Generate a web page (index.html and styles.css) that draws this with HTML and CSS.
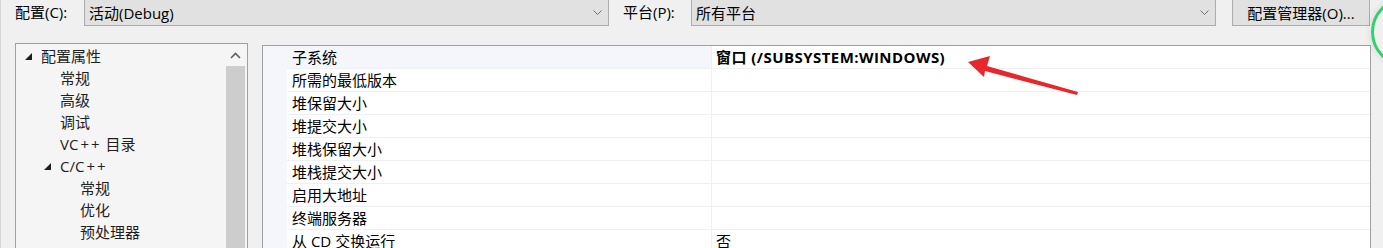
FILE: index.html
```html
<!DOCTYPE html>
<html lang="zh-CN">
  <head>
    <meta charset="UTF-8" />
    <meta name="viewport" content="width=device-width, initial-scale=1.0" />
    <title>属性页</title>
    <link rel="stylesheet" href="styles.css">
  </head>

  <body>
    <div class="toolbar">
      <label class="lbl lbl-config">配置(C):</label>
      <div class="combo">
        <span>活动(Debug)</span>
        <svg class="chev" width="9" height="6" viewBox="0 0 9 6"><polyline points="0.5,0.5 4.5,4.5 8.5,0.5" fill="none" stroke="#707070" stroke-width="1"/></svg>
      </div>
      <label class="lbl lbl-platform">平台(P):</label>
      <div class="combo">
        <span>所有平台</span>
        <svg class="chev" width="9" height="6" viewBox="0 0 9 6"><polyline points="0.5,0.5 4.5,4.5 8.5,0.5" fill="none" stroke="#707070" stroke-width="1"/></svg>
      </div>
      <button class="btn">配置管理器(O)...</button>
    </div>

    <div class="badge"></div>

    <div class="main">
      <div class="tree">
        <ul class="tree-list">
          <li class="lvl0"><span class="tri"></span>配置属性</li>
          <li class="lvl1">常规</li>
          <li class="lvl1">高级</li>
          <li class="lvl1">调试</li>
          <li class="lvl1">VC<span class="pp">++</span> 目录</li>
          <li class="lvl1 open"><span class="tri"></span>C/C<span class="pp">++</span></li>
          <li class="lvl2">常规</li>
          <li class="lvl2">优化</li>
          <li class="lvl2">预处理器</li>
        </ul>
        <div class="scrollbar">
          <div class="scroll-up">
            <svg width="11" height="7" viewBox="0 0 11 7"><polyline points="1,6 5.5,1.5 10,6" fill="none" stroke="#606060" stroke-width="1.6"/></svg>
          </div>
          <div class="thumb"></div>
        </div>
      </div>

      <div class="grid">
        <div class="gutter"></div>
        <div class="rows">
          <div class="row selected"><div class="name">子系统</div><div class="value strong">窗口 (/SUBSYSTEM:WINDOWS)</div></div>
          <div class="row"><div class="name">所需的最低版本</div><div class="value"></div></div>
          <div class="row"><div class="name">堆保留大小</div><div class="value"></div></div>
          <div class="row"><div class="name">堆提交大小</div><div class="value"></div></div>
          <div class="row"><div class="name">堆栈保留大小</div><div class="value"></div></div>
          <div class="row"><div class="name">堆栈提交大小</div><div class="value"></div></div>
          <div class="row"><div class="name">启用大地址</div><div class="value"></div></div>
          <div class="row"><div class="name">终端服务器</div><div class="value"></div></div>
          <div class="row"><div class="name">从 CD 交换运行</div><div class="value">否</div></div>
        </div>
      </div>
    </div>

    <!-- annotation arrow drawn over the screenshot -->
    <svg class="arrow" width="1383" height="248" viewBox="0 0 1383 248">
      <polygon points="967,62 989,56 986,66 1077,92 1076,95 984,71 983,77" fill="#e8262b"/>
    </svg>
  </body>
</html>
```

FILE: styles.css
```css
* {
  padding: 0;
  margin: 0;
  box-sizing: border-box;
}

html,
body {
  height: 248px;
  overflow: hidden;
}

body {
  position: relative;
  background-color: #f0f0f0;
  font-family: "Open Sans", "Noto Sans CJK SC", sans-serif;
  font-size: 15px;
  color: #000;
  border-left: 1px solid #d6d6d6;
}

.toolbar {
  display: flex;
  align-items: center;
  height: 28px;
  margin-top: -2px;
  padding-left: 14px;
}

.lbl {
  line-height: 28px;
  white-space: nowrap;
}

.lbl-config {
  width: 69px;
}

.lbl-platform {
  width: 82px;
  padding-left: 14px;
}

.combo {
  display: flex;
  align-items: center;
  justify-content: space-between;
  width: 525px;
  height: 28px;
  padding: 0 6px 0 4px;
  background-color: #e1e1e1;
  border: 1px solid #adadad;
}

.chev {
  margin-top: 2px;
}

.btn {
  width: 138px;
  height: 28px;
  margin-left: 16px;
  font-family: inherit;
  font-size: 15px;
  color: #000;
  background-color: #e1e1e1;
  border: 1px solid #adadad;
}

.badge {
  position: absolute;
  left: 1370px;
  top: -3px;
  width: 70px;
  height: 70px;
  border: 3px solid #33d16c;
  border-radius: 50%;
  box-shadow: 0 0 5px 3px rgba(0, 0, 0, 0.05);
}

.main {
  display: flex;
  align-items: flex-start;
  gap: 14px;
  padding: 17px 12px 0 14px;
}

.tree {
  display: flex;
  width: 233px;
  height: 220px;
  background-color: #f5f5f5;
  border: 1px solid #a0a0a0;
}

.tree-list {
  flex: 1;
  padding-top: 1px;
  list-style: none;
  color: #1e1e1e;
}

.tree-list li {
  height: 22px;
  line-height: 22px;
  white-space: nowrap;
}

.pp {
  letter-spacing: 2px;
  padding-left: 2px;
}

.lvl0 {
  padding-left: 9px;
}

.lvl1 {
  padding-left: 44px;
}

.lvl1.open {
  padding-left: 28px;
}

.lvl2 {
  padding-left: 64px;
}

.tri {
  display: inline-block;
  vertical-align: middle;
  width: 0;
  height: 0;
  margin: -3px 9px 0 0;
  border-left: 7px solid transparent;
  border-bottom: 7px solid #1e1e1e;
}

.scrollbar {
  width: 21px;
  padding-right: 2px;
}

.scroll-up {
  display: flex;
  align-items: center;
  justify-content: center;
  height: 22px;
}

.thumb {
  height: 200px;
  background-color: #cdcdcd;
}

.grid {
  flex: 1;
  display: flex;
  height: 210px;
  margin-top: 2px;
  background-color: #fff;
  border: 1px solid #a0a0a0;
  border-bottom: none;
}

.gutter {
  width: 24px;
  background-color: #f4f6fb;
}

.rows {
  flex: 1;
}

.row {
  display: flex;
  height: 23px;
  border-bottom: 1px solid #eef0f6;
}

.name {
  width: 425px;
  padding-left: 5px;
  line-height: 22px;
  border-right: 1px solid #eef0f6;
  white-space: nowrap;
}

.value {
  flex: 1;
  padding-left: 4px;
  line-height: 22px;
  white-space: nowrap;
}

.selected .name {
  background-color: #f4f6fb;
}

.strong {
  font-weight: bold;
  letter-spacing: 0.45px;
}

.arrow {
  position: absolute;
  left: 0;
  top: 0;
  pointer-events: none;
}
```
